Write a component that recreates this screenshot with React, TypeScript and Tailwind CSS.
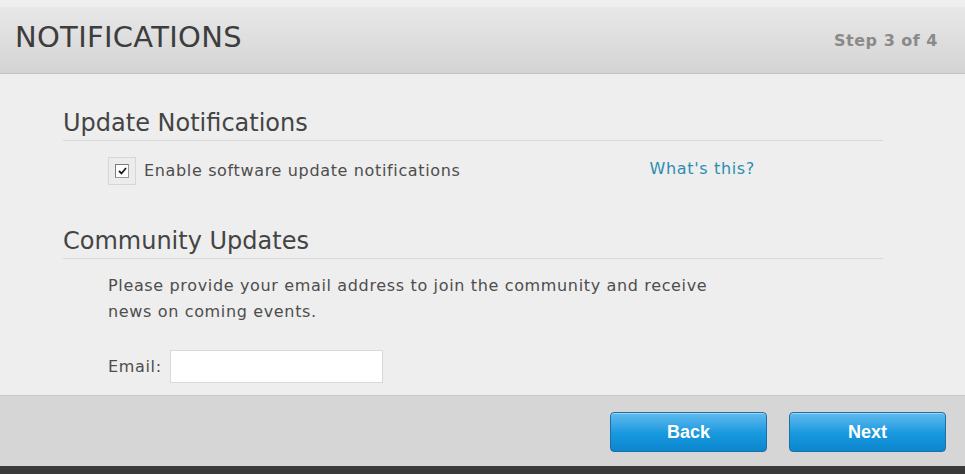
import { useState } from "react";

export default function App() {
  const [enabled, setEnabled] = useState(true);
  const [email, setEmail] = useState("");

  return (
    <div
      className="flex flex-col h-[474px] w-full bg-[#eeeeee] text-[#4d4d4d]"
      style={{ fontFamily: '"DejaVu Sans", Verdana, sans-serif' }}
    >
      <div className="h-[7px] bg-[#efefef]"></div>
      <header className="h-[67px] flex items-center justify-between px-[15px] pb-[5px] bg-gradient-to-b from-[#e8e8e8] to-[#d4d4d4] border-b border-[#c2c2c2]">
        <h1 className="text-[29px] tracking-[0.3px] text-[#3d3d3d] font-normal leading-none">
          NOTIFICATIONS
        </h1>
        <span className="text-[16px] tracking-[0.5px] font-bold text-[#8a8a8a] pr-[12px] pt-[6px]">
          Step 3 of 4
        </span>
      </header>

      <main className="flex-1 pl-[63px] pr-[82px] tracking-[0.65px]">
        <div className="pt-[3px]">
          <Section title="Update Notifications" />
        </div>
        <div className="flex items-center pl-[45px] pt-[16px]">
          <label
            className="flex items-center gap-[8px] cursor-pointer"
            onClick={() => setEnabled((c) => !c)}
          >
            <span className="size-[28px] grid place-content-center border border-[#d6d6d6] bg-[#ececec]">
              <span className="size-[14px] grid place-content-center bg-white border border-[#9a9a9a] border-t-[#7a7a7a] border-l-[#7a7a7a]">
                {enabled && (
                  <svg width="9" height="8" viewBox="0 0 9 8">
                    <path
                      d="M1 4 L3.5 6.5 L8 1"
                      fill="none"
                      stroke="#1a1a1a"
                      strokeWidth="1.8"
                    />
                  </svg>
                )}
              </span>
            </span>
            <span className="text-[16px]">
              Enable software update notifications
            </span>
          </label>
          <a href="#" className="ml-[189px] text-[16px] text-[#2a8fb0] -mt-[5px]">
            What's this?
          </a>
        </div>

        <div className="pt-[10px]">
          <Section title="Community Updates" />
        </div>
        <p className="pl-[45px] pt-[14px] text-[16px] leading-[26px] w-[700px]">
          Please provide your email address to join the community and receive
          <br />
          news on coming events.
        </p>
        <div className="flex items-center gap-[8px] pl-[45px] pt-[25px]">
          <span className="text-[16px]">Email:</span>
          <input
            type="text"
            value={email}
            onChange={(e) => setEmail(e.target.value)}
            className="w-[213px] h-[33px] bg-white border border-[#d9d9d9] outline-none px-2 text-[14px]"
          />
        </div>
      </main>

      <footer className="h-[71px] flex items-center justify-end gap-[22px] pr-[19px] pt-[2px] bg-[#d6d6d6] border-t border-[#c6c6c6]">
        <NavButton label="Back" />
        <NavButton label="Next" />
      </footer>
      <div className="h-[8px] bg-[#3a3a3a]"></div>
    </div>
  );
}

function Section({ title }: { title: string }) {
  return (
    <div className="pt-[29px] border-b border-[#d8d8d8]">
      <h2 className="text-[24px] leading-[34px] tracking-normal text-[#444] font-normal">
        {title}
      </h2>
    </div>
  );
}

function NavButton({ label }: { label: string }) {
  return (
    <button
      className="w-[157px] h-[40px] rounded-[4px] border border-[#1e6fa6] bg-gradient-to-b from-[#5dbbee] via-[#1a9be0] to-[#0a86cf] text-white font-bold text-[18px] shadow-[inset_0_1px_0_rgba(255,255,255,0.4)]"
      style={{ fontFamily: '"Liberation Sans", Arial, sans-serif' }}
    >
      {label}
    </button>
  );
}
